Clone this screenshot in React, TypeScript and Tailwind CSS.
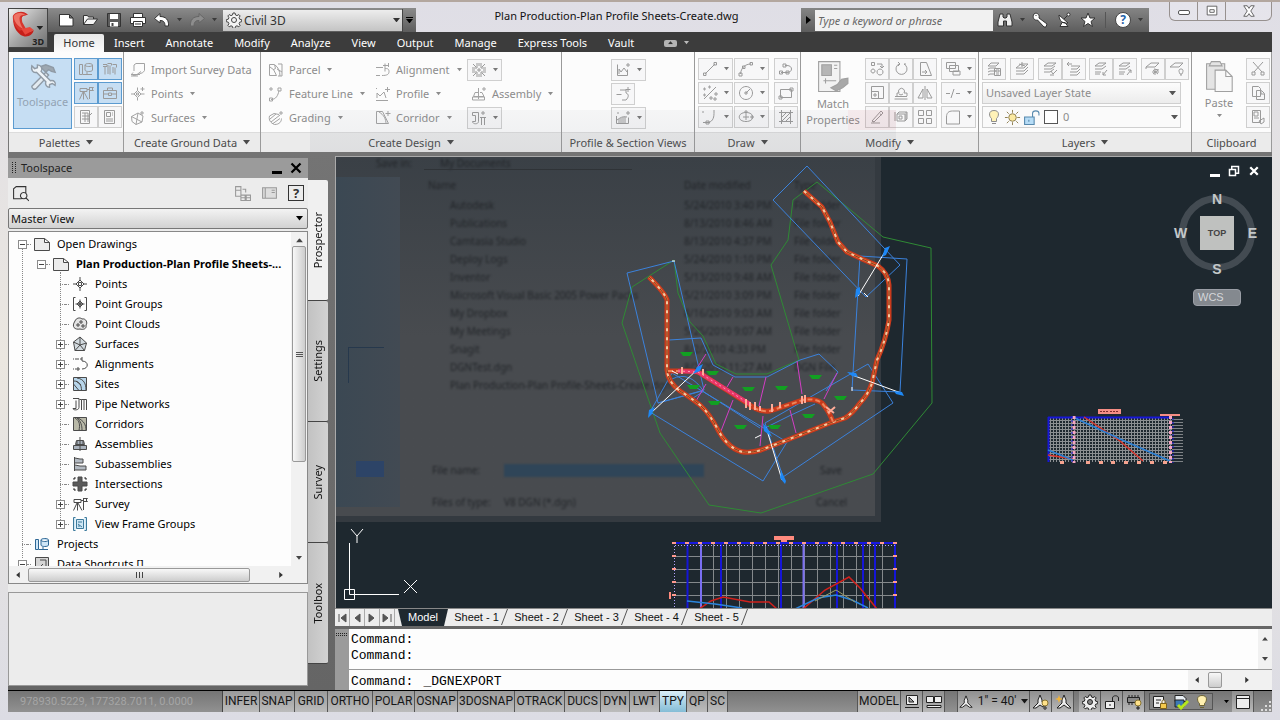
import type { ReactNode } from "react";

type IconProps = {
  d: string;
  fill?: string;
  className?: string;
  children?: ReactNode;
};

const Icon = ({ d, fill = "none", className = "size-4", children }: IconProps) => (
  <svg viewBox="0 0 16 16" className={`shrink-0 ${className}`} fill={fill} stroke="currentColor" strokeWidth="1" aria-hidden="true">
    <path d={d} />
    {children}
  </svg>
);

const Caret = ({ className = "w-[5px]" }: { className?: string }) => (
  <svg viewBox="0 0 8 5" className={`shrink-0 ${className}`} fill="currentColor" aria-hidden="true">
    <path d="M0 0h8L4 5z" />
  </svg>
);

// Line icons, all on a 16px grid
const paths = {
  prospector: "M1.5 3.5h3v10h-3zM7 4c0-2 7.500-2 7.500 0v5c0 2-7.500 2-7.500 0zM7 4c0 2 7.500 2 7.500 0M5 13.500h9M9 11v2",
  pipes: "M1 3.500h4v2h-4M3 5.500v8M5.500 2.500h4v2M8 4.500v9M6 4v9M10.500 3.500h4v3M13 6.500v7M11 6v6",
  survey: "M2 3.500h7v3h-7zM9 4.500h2M5.500 6.500v8M5 7l-3.500 7.500M6 7l4 7.500M11.500 2v12M11.500 2.500h4l-1.500 1.500 1.500 1.500h-4",
  toolbox: "M1.500 5.500h13v8h-13zM5.500 5V3h5v2M1.500 9h5M9.500 9h5M6.500 8h3v2.500h-3z",
  sheet: "M2.500 1.500h9v13h-9zM4 4h6M4 7h8M4 10h8M7 4v9M10 4v9M12 6l2-2",
  props: "M2.500 1.500h10v13h-10zM4.500 3.500h4v4h-4zM10 4h1M10 6h1M4 10h7M4 12h7",
  importData: "M4 9V3l2-1.500h8.500v7c-1 2-3 3-5 3M1 12.500h9M3 10.500c-3 3 2 4 4 2l4-3M8 14h-7",
  points: "M7.500 1.500v3M7.500 11.500v3M1 8h3.500M11 8h3.500M7.500 4.500L11 8l-3.500 3.500L4 8zM6.500 7h2v2h-2zM12.500 1v4M10.500 3h4",
  surfaces: "M1.500 6.500L8 3l5 3-1 6-6 2.500-4-3zM8 3l-2 11.500M1.500 6.500L12 12M12 1v4M10 3h4",
  parcel: "M1.500 2.500h5l1 4-2 1 3 6h-7zM7 3c3 2 5 6 5 11M10 2h4v12h-4M9 7l5 3M2 5l4 3",
  feature: "M3 1v4M1 3h4M3 13.500c5 0 7-4 8-9M1.500 12h3v3h-3zM10 2h3v3h-3z",
  grading: "M1.500 6L6 3.500l5 1M1.500 6c-1 4 1 7 5 8.500 5 0 7-3 7-6M3 12L12 5M5 13.500l7-5M2 9l6-5M13 1v4M11 3h4",
  alignment: "M1 5.500h7M10 1.500v8M7 13.500c5 0 7-1 7-4s-2-3-4-3M1 13.500h4M8 3.500h5M13.500 1v4",
  profile: "M1.500 2v1M1 14.500h12M2 12V7l3 3 4-4 2 6M12.500 1v5M10 3.500h5",
  corridor: "M1.500 1.500h6l6 12h-12zM4 2c5 3 7 7 7 12M13 1v5M10.500 3.500h5",
  intersection: "M6 1v5H1M6 15v-5H1M10 1v5h5M10 15v-5h5M8 1v3M8 6v4M8 12v3M1 8h3M6 8h4M12 8h3M2 2l3 3M14 2l-3 3M2 14l3-3M14 14l-3-3",
  assembly: "M7.500 2v11M4 6.500h3.500v4H2.500zM9 6.500h2l2 4H7.500M1.500 11h12v3h-12zM13 1v4M11 3h4",
  network: "M1.500 2.500h6v9c0 3-6 3-6 0h3v-6h-3zM10.500 7v8M13.500 7v8M9 7.500h6M12 1v4M10 3h4",
  profileView: "M2.500 2.500v11h10v-6M4 12V7l2 3 3-4 3 4M13 1v4M11 3h4",
  sample: "M5 4h6v3c3 1 3 4 0 7H7M1.500 8.500h5M13 1v5M10.500 3.500h5",
  section: "M1.500 6v7.500h12v-6M2 10c3-2 5-4 10-3M4 9v4M6 8v5M8 7v6M10 7v6M13 1v4M11 3h4M2 3h2",
  line: "M3 13L13 3M1.500 12h2.500v2.500H1.500zM12 1.500h2.500V4H12z",
  arc: "M2.500 13C3 7 7 3 13 3M1 12h3v3H1zM4.500 5h2.500v2.500H4.500zM12 1.500h2.500V4H12z",
  polyline: "M3 11.500h6c6 0 6-7 0-7H7M1.500 10h3v3h-3zM8 10h3v3H8zM5 3h3v3H5z",
  construct: "M2 14L14 2M2 3h1v2H2zM7 1h1v2H7zM2 9h1v2H2zM8 12h2v2H8zM13 8h2v2h-2zM12 13h2v2h-2z",
  circle: "M8 1.500a6.500 6.500 0 1 0 .01 0M8 8l4-4M7 7h2v2H7z",
  rect: "M2.500 4.500h11v8h-11zM1 11h3v3H1zM12 3h3v3h-3z",
  curve: "M1 13.500h4c5 0 7-4 7-9V1M8 13.500h-3M1 2v2M4 12h3v3H4z",
  ellipse: "M8 3.500c9 0 9 9 0 9s-9-9 0-9M8 5v6M5 8h6M7 2h2v2H7zM13 7h2v2h-2z",
  hatch: "M3.500 1v14M12.500 1v14M1 3.500h14M1 12.500h14M4 8l4-4M4 12l8-8M8 12l4-4",
  copy: "M2.500 1.500h3v3h-3zM4 8a2 2 0 1 0 .01 0M11 8a3 3 0 1 0 .01 0M8 3h5v3M11 5l2 2 2-2",
  rotate: "M6 3a5.500 5.500 0 1 0 5 0M5 1l2 2-2 2M11 3h2",
  stretch: "M3.500 1.500h6l5 13h-11zM5 11h5M8 9l2 2-2 2",
  scale: "M2.500 1.500h12v12h-12zM2.500 6.500h7v7M5 9h2v2H5z",
  offset: "M2 11.500h12M4 11V8h2a3 3 0 1 1 5 0h3v3M1.500 14h13M6 9l2 1 2-1",
  mirror: "M8 1v14M6 4v9H1zM10 4v9h5z",
  erase: "M2 14h9M3 12l9-10 2 2-9 9zM3 12l2 1M11 5l2 1",
  explode: "M4 5h8v7H4zM4 5l2-2h8v7l-2 2M2 3v9M6 7h3v3H6zM13 3v8",
  array: "M1.500 1.500h5v5h-5zM9.500 1.500h5v5h-5zM1.500 9.500h5v5h-5zM9.500 9.500h5v5h-5z",
  order: "M1.500 1.500h9v6h-9zM4.500 4.500h9v6h-9zM8 10h7v4H8z",
  trim: "M1 8.500h4M11 8.500h4M6 13l3-9",
  fillet: "M1.500 15V8c0-4 2-6 6-6h7v13z",
  layers: "M2 5l3-3h8l-3 3zM2 8l2-1h6M2 11l2-1h6M2 14l2-1h5M8.500 7.500h6v7h-6zM10 9h3v2h-3zM10 13h3",
  layerIso: "M2 7l5-4h7l-4 4zM2 10h8l4-4M2 13h8l4-4M8 1v5M5 3l6 2",
  layerMatch: "M2 5l4-3h8l-4 3zM2 8h7l4-3M2 11h6l4-3M9 10l2 3 4-4M8 14h4",
  layerPrev: "M5 5h9l-3 3H5M4 11h7l3-3M4 14h7l3-3M1 3h5M1 3l2-2M1 3l2 2",
  layerDown: "M2 5l4-3h7l-4 3zM2 8h7l4-3M2 11h6M2 13h5M14 9l-4 5M10 11v3h3",
  layerUp: "M2 5l4-3h7l-4 3zM2 8h7l4-3M2 11h6M2 13h5M10 14l4-5M14 12V9h-3",
  layerFreeze: "M1 6l5-4h8l-4 4zM1 6v2M9 8l5 1M10 8v6M7 11h7M8 9l5 4M13 9l-5 4",
  layerOff: "M1 6l5-4h8l-4 4zM12 8c3 0 2 3 1 5h-2c-1-2-2-5 1-5zM11 14h2",
  cut: "M3 1l9 10M13 1L4 11M2 11h3v3H2zM11 11h3v3h-3z",
  copyClip: "M2.500 1.500h6l2 2v8h-8zM6.500 5.500h5l3 3v6h-8zM11 6v3h3",
  matchClip: "M2.500 1.500h8v12h-8zM4 3h4v4H4zM9 12l5-3v4l-3 2zM4 9h5",
  drawing: "M.5 2.500h10l5 4v8H.5zM10.500 2.500v4h5",
  pointGroups: "M3.500 1.500h-2v13h2M12.500 1.500h2v13h-2M8 3.500v9M3.500 8h9M8 5l3 3-3 3-3-3zM7 7h2v2H7z",
  clouds: "M3 5c1-3 5-4 7-2 4-1 6 4 4 6 1 4-3 5-6 4-5 1-9-2-5-8zM5 8h2v2H5zM8 5h2v2H8zM10 9h2v2h-2z",
  assemblies: "M8 1v14M4.500 4.500h7l1 4h-9zM1.500 9.500h13v4h-13zM5 5v4M11 5v4",
  subassembly: "M2.500 1v14M3 2l5 1h3v4H3M3 9l5 1h6v4H3",
  shortcuts: "M1.500 1.500h13v13h-13zM4 13l5-5M6 4h6v6",
  viewFrames: "M3.500 1.500h-2v13h2M12.500 1.500h2v13h-2M4.500 3.500h7v9h-7zM6 6h4M6 8l4 3M6 10h2",
};

const BoxBtn = ({ label, d, caret = false, on = false }: { label: string; d: string; caret?: boolean; on?: boolean }) => (
  <button
    type="button"
    aria-label={label}
    className={`flex h-[22px] items-center justify-center border text-[#9a9a9a] ${
      on ? "border-[#5b9bd0] bg-[#c6def3]" : "border-[#cfcfcf] bg-gray-400/5"
    } ${caret ? "w-[35px] gap-1.5" : "w-6"}`}
  >
    <Icon d={d} />
    {caret && <Caret className="w-[5px] text-[#777]" />}
  </button>
);

const RibbonItem = ({ label, d, caret = true }: { label: string; d: string; caret?: boolean }) => (
  <button type="button" className="flex h-6 items-center gap-[5px] whitespace-nowrap text-[#8c8c8c]">
    <Icon d={d} className="size-4 text-[#a3a3a3]" />
    <span>{label}</span>
    {caret && <Caret className="ml-0.5 w-[5px]" />}
  </button>
);

const Row = ({ children }: { children: ReactNode }) => <div className="flex h-6 items-center">{children}</div>;

const Panel = ({ title, caret = true, className, children }: { title: string; caret?: boolean; className: string; children: ReactNode }) => (
  <section className={`flex flex-col border-r border-[#9a9a9a] ${className}`}>
    <div className="flex flex-1 items-start pt-[6px]">{children}</div>
    <button type="button" className="flex h-5 items-center justify-center gap-1.5 whitespace-nowrap border-t border-[#dcdcdc] bg-[#ebebeb] text-[#4a4a4a]">
      {title}
      {caret && <Caret className="w-[7px]" />}
    </button>
  </section>
);

const QatBtn = ({ label, children }: { label: string; children: ReactNode }) => (
  <button type="button" aria-label={label} className="flex h-[23px] w-6 items-center justify-center text-[#333]">
    {children}
  </button>
);

const TinyCaret = ({ label }: { label: string }) => (
  <button type="button" aria-label={label} className="flex h-[23px] w-[11px] items-center justify-center text-[#3a3a3a]">
    <Caret className="w-[5px]" />
  </button>
);

const tabs = ["Insert", "Annotate", "Modify", "Analyze", "View", "Output", "Manage", "Express Tools", "Vault"];

const TitleBar = () => (
  <div className="flex items-start">
    <div className="flex h-6 items-center bg-linear-to-b from-[#8b8b8b] to-[#5d5d5d] pl-[6px]">
      <QatBtn label="New">
        <Icon d="M1.500 2.500h10l3.500 3.500v8h-13.500zM11.500 2.500v3.500h3.500" fill="#fff" />
      </QatBtn>
      <QatBtn label="Open">
        <Icon d="M1.500 12.500V3.500h4l1 1.500h5v2M1.500 12.500l4-5.500h10l-4 5.500z" fill="#f4f4f4" />
      </QatBtn>
      <QatBtn label="Save">
        <Icon d="M1.500 1.500h13v13h-13z" fill="#5c5c5c">
          <path d="M4 2h8v5H4zM4 10h8v4.500H4z" fill="#fff" stroke="none" />
          <path d="M5.500 11h2v3h-2z" fill="#444" stroke="none" />
        </Icon>
      </QatBtn>
      <QatBtn label="Plot">
        <Icon d="M3.500 5V1.500h9V5M.5 5.500h15v6H.5z" fill="#fff">
          <path d="M3.500 9.500h9v5h-9zM5 12h6" />
        </Icon>
      </QatBtn>
      <QatBtn label="Undo">
        <Icon d="M6 1.500L.5 6.500 6 11V8.500c3 0 5 1 5 5.500h3.500C15 8 12 4.500 6 4.500z" fill="#fff" />
      </QatBtn>
      <TinyCaret label="Undo list" />
      <QatBtn label="Redo">
        <Icon d="M10 1.500l5.500 5L10 11V8.500c-3 0-5 1-5 5.500H1.500C1 8 4 4.500 10 4.500z" fill="#8d8d8d" className="size-4 text-[#666]" />
      </QatBtn>
      <TinyCaret label="Redo list" />
      <div className="ml-[3px] flex h-[21px] w-[179px] items-center bg-linear-to-b from-[#ededed] to-[#c4c4c4] pl-[3px]">
        <svg viewBox="0 0 16 16" className="size-4 shrink-0" fill="none" stroke="#444" aria-hidden="true">
          <path
            d="M7 1h2l.5 2 1.500.6 1.800-1 1.300 1.300-1 1.800.6 1.500 2 .5v2l-2 .5-.6 1.500 1 1.800-1.300 1.300-1.800-1-1.500.6-.5 2H7l-.5-2-1.500-.6-1.800 1-1.300-1.300 1-1.800-.6-1.500-2-.5v-2l2-.5.6-1.500-1-1.800 1.300-1.300 1.800 1L6.500 3z"
            fill="#f4f4f4"
          />
          <circle cx="8" cy="8" r="2.500" />
        </svg>
        <select aria-label="Workspace" className="h-full min-w-0 flex-1 appearance-none bg-transparent pl-[2px] text-[12px] text-[#333]">
          <option>Civil 3D</option>
        </select>
        <Caret className="mr-0.5 w-[7px] text-[#333]" />
      </div>
      <button type="button" aria-label="Customize toolbar" className="flex h-[23px] w-[14px] flex-col items-center justify-center gap-[1px] border-l border-[#444] text-black">
        <span className="h-[1px] w-[7px] bg-black" />
        <Caret className="w-[7px]" />
      </button>
    </div>
    <h1 className="flex-1 truncate pl-4 text-center leading-4 text-[#111]">Plan Production-Plan Profile Sheets-Create.dwg</h1>
    <div className="flex h-6 items-center bg-linear-to-b from-[#858585] to-[#5d5d5d]">
      <button type="button" aria-label="Search options" className="flex h-[23px] w-[14px] items-center justify-center">
        <svg viewBox="0 0 5 8" className="h-2" aria-hidden="true">
          <path d="M0 0v8l5-4z" />
        </svg>
      </button>
      <input
        type="text"
        aria-label="Keyword search"
        placeholder="Type a keyword or phrase"
        className="h-[21px] w-[178px] bg-[#f1f1f1] px-[3px] italic placeholder:text-[#666]"
      />
      <QatBtn label="Search">
        <Icon d="M3 2h3v3l1 1h2l1-1V2h3l2 8v4H9.500V9h-3v5H1v-4z" fill="#eee" />
      </QatBtn>
      <TinyCaret label="Search scope" />
      <QatBtn label="Subscription center">
        <Icon d="M2 2c2-2 6 0 5 4l8 6-1 3h-2L5.500 8C2 9 0 5 2 2zM4 3v1" fill="#fff" />
      </QatBtn>
      <QatBtn label="Communication center">
        <Icon d="M3 3c0 6 4 9 9 8zM8 7l4-4M4 14.500h8l-3-4H6z" fill="#fff">
          <circle cx="12.500" cy="2.500" r="1.500" />
        </Icon>
      </QatBtn>
      <QatBtn label="Favorites">
        <Icon d="M8 1l2 5h5l-4 3.500 1.500 5L8 11.500l-4.500 3 1.500-5L1 6h5z" fill="#fff" />
      </QatBtn>
      <span className="mx-[5px] h-4 w-[1px] bg-[#555]" />
      <button type="button" className="mr-1 ml-1 flex size-4 items-center justify-center rounded-full border border-[#444] bg-white text-[12px] leading-none font-bold text-[#1f62a8]">
        ?
      </button>
      <TinyCaret label="Help menu" />
      <span className="w-[3px]" />
    </div>
    <div className="-mt-[7px] ml-5 flex h-5 rounded-b-md border border-t-0 border-[#97918f] bg-white/20 text-[#555]">
      <button type="button" aria-label="Minimize" className="flex w-7 items-center justify-center border-r border-[#97918f]">
        <span className="mt-1 h-[5px] w-3 rounded-xs border border-[#555] bg-white" />
      </button>
      <button type="button" aria-label="Restore" className="flex w-7 items-center justify-center border-r border-[#97918f]">
        <Icon d="M2.500 2.500h11v10h-11zM5.500 6.500h5v3h-5z" fill="#fff" className="size-3.5" />
      </button>
      <button type="button" aria-label="Close" className="flex w-[45px] items-center justify-center">
        <Icon d="M2 2h4l2 3 2-3h4l-4 6 4 6h-4l-2-3-2 3H2l4-6z" fill="#fff" className="size-3.5" />
      </button>
    </div>
  </div>
);

const Header = () => (
  <header className="flex pt-[7px]">
    <div className="flex flex-col bg-[#3c3c3c]">
      <button type="button" className="relative h-10 w-10 border border-[#444] bg-linear-to-br from-[#f0f0f0] via-[#a8a8a8] to-[#6f6f6f]">
        <svg viewBox="0 0 40 40" className="absolute inset-0 size-full" aria-hidden="true">
          <path d="M12 27c-7-5-10-16-5-22 3-3 9-3 13 1l-5 1c-4 3-2 12 3 16 2 2 5 1 8-1-1 6-8 9-14 5z" fill="#c51f1a" />
          <path d="M4 8c1-5 10-6 15-2l-6 2 1 6 4 7-7 2C7 20 4 14 4 8z" fill="#d7372e" />
          <path d="M5 8c1-4 8-5 12-2-4 0-6 1-6 4 0 4 2 8 4 11C9 18 5 13 5 8z" fill="#ee7466" />
          <path d="M13 21l9-2 4 3-9 5z" fill="#e8473c" />
          <path d="M29 18h7l-3.500 4z" fill="#222" />
        </svg>
        <span className="absolute right-[3px] bottom-0 text-[9px] font-bold text-[#222]">3D</span>
      </button>
    </div>
    <div className="min-w-0 flex-1">
      <TitleBar />
      <nav className="flex h-5 items-stretch bg-[#3c3c3c] pt-[2px] pl-[6px] text-white">
        <button type="button" className="w-[50px] rounded-t-xs bg-linear-to-b from-[#e8e8e8] to-[#fbfbfb] text-[#333]">
          Home
        </button>
        <div className="flex gap-[21px] pl-[10px]">
          {tabs.map((tab) => (
            <button key={tab} type="button" className="whitespace-nowrap">
              {tab}
            </button>
          ))}
        </div>
        <button type="button" aria-label="Minimize ribbon" className="ml-[30px] flex items-center gap-[7px] text-[#bbb]">
          <span className="flex h-[7px] w-[13px] items-center justify-center rounded-xs bg-[#b4b4b4] text-[#333]">
            <Caret className="w-[5px] rotate-180" />
          </span>
          <Caret className="w-[5px]" />
        </button>
      </nav>
    </div>
  </header>
);

const Ribbon = () => (
  <div className="flex h-[100px] shrink-0 border-l border-[#777] bg-[#fcfcfc]">
    <Panel title="Palettes" className="w-[115px]">
      <button type="button" className="ml-1 flex h-[71px] w-[59px] flex-col items-center border border-[#5b9bd0] bg-[#c6def3] pt-1 text-[#93a3b3]">
        <svg viewBox="0 0 30 30" className="size-7" fill="none" stroke="#8f9aa5" strokeWidth="1.500" aria-hidden="true">
          <path d="M12 4l6-2 8 3 2 5-4-1-3-2-3 3-4-4z" fill="#9da7b0" />
          <path d="M18 10L6 22l-3 3c0 3 3 4 5 2L21 13z" fill="#e2eaf0" />
          <path d="M3 3l3 3 3-1V2c4 0 6 4 4 7l10 10c4-1 6 2 5 5l-3-2-3 1v3c-3 0-5-3-4-6L8 10C4 11 2 7 3 3z" fill="#eef3f7" />
        </svg>
        <span className="mt-1">Toolspace</span>
      </button>
      <div className="ml-0.5 grid grid-cols-2 gap-y-[2px]">
        <BoxBtn on label="Prospector palette" d={paths.prospector} />
        <BoxBtn on label="Settings palette" d={paths.pipes} />
        <BoxBtn on label="Survey palette" d={paths.survey} />
        <BoxBtn on label="Toolbox palette" d={paths.toolbox} />
        <BoxBtn label="Panorama" d={paths.sheet} />
        <BoxBtn label="Properties" d={paths.props} />
      </div>
    </Panel>
    <Panel title="Create Ground Data" className="w-[137px]">
      <div className="ml-[6px] flex flex-col">
        <RibbonItem label="Import Survey Data" d={paths.importData} caret={false} />
        <RibbonItem label="Points" d={paths.points} />
        <RibbonItem label="Surfaces" d={paths.surfaces} />
      </div>
    </Panel>
    <Panel title="Create Design" className="w-[301px]">
      <div className="ml-[7px] flex w-[107px] flex-col">
        <RibbonItem label="Parcel" d={paths.parcel} />
        <RibbonItem label="Feature Line" d={paths.feature} />
        <RibbonItem label="Grading" d={paths.grading} />
      </div>
      <div className="flex w-[92px] flex-col">
        <RibbonItem label="Alignment" d={paths.alignment} />
        <RibbonItem label="Profile" d={paths.profile} />
        <RibbonItem label="Corridor" d={paths.corridor} />
      </div>
      <div className="flex flex-col">
        <Row>
          <BoxBtn caret label="Intersections" d={paths.intersection} />
        </Row>
        <div className="pl-1">
          <RibbonItem label="Assembly" d={paths.assembly} />
        </div>
        <Row>
          <BoxBtn caret label="Pipe network" d={paths.network} />
        </Row>
      </div>
    </Panel>
    <Panel title="Profile & Section Views" caret={false} className="w-[133px]">
      <div className="ml-[49px] flex flex-col">
        <Row>
          <BoxBtn caret label="Profile view" d={paths.profileView} />
        </Row>
        <Row>
          <BoxBtn label="Sample lines" d={paths.sample} />
        </Row>
        <Row>
          <BoxBtn caret label="Section views" d={paths.section} />
        </Row>
      </div>
    </Panel>
    <Panel title="Draw" className="w-[106px]">
      <div className="ml-[3px] grid grid-cols-[36px_40px_24px] gap-y-[2px]">
        <BoxBtn caret label="Line" d={paths.line} />
        <BoxBtn caret label="Arc" d={paths.arc} />
        <BoxBtn label="Polyline" d={paths.polyline} />
        <BoxBtn caret label="Points by angle" d={paths.construct} />
        <BoxBtn caret label="Circle" d={paths.circle} />
        <BoxBtn label="Rectangle" d={paths.rect} />
        <BoxBtn caret label="Curve" d={paths.curve} />
        <BoxBtn caret label="Ellipse" d={paths.ellipse} />
        <BoxBtn label="Hatch" d={paths.hatch} />
      </div>
    </Panel>
    <Panel title="Modify" className="w-[178px]">
      <button type="button" className="flex w-[64px] flex-col items-center pt-0.5 leading-4 text-[#8c8c8c]">
        <svg viewBox="0 0 30 30" className="size-8" fill="#f2f2f2" stroke="#a0a0a0" aria-hidden="true">
          <path d="M1.500 1.500h20v28h-20z" />
          <path d="M4.500 4.500h9v10h-9z" fill="#b5b5b5" />
          <path d="M16 5h3M16 8h3M6 19.500h12M8 17v5" fill="none" />
          <path d="M13 26l6-3 4-5 6-1v5l-5 4-6 3z" fill="#a8a8a8" />
        </svg>
        <span className="mt-1">Match</span>
        <span>Properties</span>
      </button>
      <div className="grid grid-cols-3 gap-y-[2px]">
        <BoxBtn label="Copy" d={paths.copy} />
        <BoxBtn label="Rotate" d={paths.rotate} />
        <BoxBtn label="Stretch" d={paths.stretch} />
        <BoxBtn label="Scale" d={paths.scale} />
        <BoxBtn label="Offset" d={paths.offset} />
        <BoxBtn label="Mirror" d={paths.mirror} />
        <BoxBtn label="Erase" d={paths.erase} />
        <BoxBtn label="Explode" d={paths.explode} />
        <BoxBtn label="Array" d={paths.array} />
      </div>
      <div className="ml-1 grid gap-y-[2px]">
        <BoxBtn caret label="Draw order" d={paths.order} />
        <BoxBtn caret label="Trim" d={paths.trim} />
        <BoxBtn caret label="Fillet" d={paths.fillet} />
      </div>
    </Panel>
    <Panel title="Layers" className="w-[213px]">
      <div className="ml-[3px] flex w-[207px] flex-col gap-[2px]">
        <div className="flex justify-between">
          <BoxBtn label="Layer properties" d={paths.layers} />
          <BoxBtn label="Layer isolate" d={paths.layerIso} />
          <div className="flex">
            <BoxBtn label="Layer match" d={paths.layerMatch} />
            <BoxBtn label="Layer previous" d={paths.layerPrev} />
          </div>
          <div className="flex">
            <BoxBtn label="Make current" d={paths.layerDown} />
            <BoxBtn label="Change layer" d={paths.layerUp} />
          </div>
          <div className="flex">
            <BoxBtn label="Layer freeze" d={paths.layerFreeze} />
            <BoxBtn label="Layer off" d={paths.layerOff} />
          </div>
        </div>
        <div className="flex h-[22px] w-[199px] items-center border border-[#cfcfcf] bg-linear-to-b from-[#fcfcfc] to-[#ececec] pr-1 text-[#8c8c8c]">
          <select aria-label="Layer state" className="min-w-0 flex-1 appearance-none bg-transparent pl-[3px]">
            <option>Unsaved Layer State</option>
          </select>
          <Caret className="w-[7px] text-[#555]" />
        </div>
        <div className="flex h-[22px] w-[199px] items-center gap-0.5 border border-[#cfcfcf] bg-[#fafafa] pr-0.5 pl-[3px] text-[#8c8c8c]">
          <Icon d="M8 1.500c6 0 5 6 2.500 8v3h-5v-3C3 7.500 2 1.500 8 1.500zM6 14.500h4" fill="#fff2b8" />
          <svg viewBox="0 0 18 18" className="size-[17px]" fill="#fbe9a0" stroke="#8b7b4c" aria-hidden="true">
            <circle cx="9" cy="9" r="4" />
            <path d="M9 1v3M9 14v3M1 9h3M14 9h3M3 3l2 2M15 3l-2 2M3 15l2-2M15 15l-2-2" />
          </svg>
          <Icon d="M1.500 7.500h9v7h-9zM5.500 10v2" fill="#b6dcf6" className="size-[17px] text-[#5789ad]">
            <path d="M9 7.500V4c0-3 6-3 6 0v2" fill="none" />
          </Icon>
          <span className="ml-[2px] size-[14px] border border-[#555] bg-white" />
          <select aria-label="Layer" className="min-w-0 flex-1 appearance-none bg-transparent pl-[3px]">
            <option>0</option>
          </select>
          <Caret className="w-[7px] text-[#555]" />
        </div>
      </div>
    </Panel>
    <Panel title="Clipboard" caret={false} className="min-w-20 flex-1">
      <button type="button" className="flex w-[54px] flex-col items-center pt-0.5 text-[#8c8c8c]">
        <svg viewBox="0 0 26 30" className="h-8" fill="#e4e4e4" stroke="#a0a0a0" aria-hidden="true">
          <path d="M1.500 3.500h17v24h-17z" />
          <path d="M6 1.500h8l2 4H4z" />
          <path d="M9.500 9.500h10l6 6v14h-16zM19.500 9.500v6h6" fill="#f8f8f8" />
        </svg>
        <span className="mt-1">Paste</span>
        <Caret className="mt-1 w-[5px]" />
      </button>
      <div className="grid gap-y-[2px]">
        <BoxBtn label="Cut" d={paths.cut} />
        <BoxBtn label="Copy clip" d={paths.copyClip} />
        <BoxBtn label="Match clip" d={paths.matchClip} />
      </div>
    </Panel>
  </div>
);

type TreeNode = { label: string; level: 0 | 1 | 2; box: "+" | "-" | ""; d: string; fill?: string; tone?: string };

const tree: TreeNode[] = [
  { label: "Open Drawings", level: 0, box: "-", d: paths.drawing, fill: "#ececec" },
  { label: "Plan Production-Plan Profile Sheets-...", level: 1, box: "-", d: paths.drawing, fill: "#ececec" },
  { label: "Points", level: 2, box: "", d: "M8 1v3M8 12v3M1 8h3M12 8h3M8 4l4 4-4 4-4-4zM6.500 6.500h3v3h-3z" },
  { label: "Point Groups", level: 2, box: "", d: paths.pointGroups },
  { label: "Point Clouds", level: 2, box: "", d: paths.clouds, fill: "#e4e4e4" },
  { label: "Surfaces", level: 2, box: "+", d: "M1.500 6l6.500-5 6.500 6-2 7.500h-9.500zM8 1v8M8 9l6.500-2M8 9l-5 5.500M8 9l4.500 5.500M1.500 6L8 9", fill: "#d3dbe0" },
  { label: "Alignments", level: 2, box: "+", d: "M1 3h1M3 3h4M8 3h2M10 1v4M3 13h5M1 13h1M10 13c7 0 7-8 0-8M6 11v4" },
  { label: "Sites", level: 2, box: "+", d: "M1.500 1.500h13v13h-13zM1.500 5c6 0 8 4 8 9.500M5 2c7 1 9 6 9 12M1.500 8l5 6M4 5l5 4", fill: "#b7d5ea" },
  { label: "Pipe Networks", level: 2, box: "+", d: "M1 2.500h6v9c0 3-6 3-6 1h3v-8M9.500 14V3.500h5V14M9.500 3.500h-2M12 4v10" },
  { label: "Corridors", level: 2, box: "", d: "M1.500 1.500h13v13h-13zM3 2c5 3 5 7 4 12.500M6 2c6 3 8 7 8 12M5 2c4 3 5 8 5 12", fill: "#b9b9a8" },
  { label: "Assemblies", level: 2, box: "", d: paths.assemblies, fill: "#a9b2bd" },
  { label: "Subassemblies", level: 2, box: "", d: paths.subassembly, fill: "#b3bac2" },
  { label: "Intersections", level: 2, box: "", d: "M6 1h4v5h5v4h-5v5H6v-5H1V6h5zM3 1v2H1M13 1v2h2M3 15v-2H1M13 15v-2h2", fill: "#5b5b5b" },
  { label: "Survey", level: 2, box: "+", d: paths.survey },
  { label: "View Frame Groups", level: 2, box: "+", d: paths.viewFrames, fill: "#cfe7f5", tone: "text-[#3d7a9c]" },
  { label: "Projects", level: 0, box: "", d: paths.prospector, fill: "#cfe6f7", tone: "text-[#2e6795]" },
  { label: "Data Shortcuts []", level: 0, box: "-", d: paths.shortcuts, fill: "#d5d5d5" },
];

const indents = ["pl-[9px]", "pl-[28px]", "pl-[47px]"];

const TreeRow = ({ node }: { node: TreeNode }) => (
  <li className={`relative flex h-5 items-center whitespace-nowrap ${indents[node.level]}`}>
    {node.box ? (
      <button
        type="button"
        aria-label={`Toggle ${node.label}`}
        className="flex size-[9px] shrink-0 items-center justify-center border border-[#8c8c8c] bg-white text-[#444]"
      >
        <svg viewBox="0 0 5 5" className="size-[5px]" stroke="currentColor" aria-hidden="true">
          <path d={node.box === "+" ? "M0 2.500h5M2.500 0v5" : "M0 2.500h5"} />
        </svg>
      </button>
    ) : (
      <span className="ml-1 w-[5px] shrink-0 border-t border-dotted border-[#888]" />
    )}
    <span className="mr-[3px] w-1 shrink-0 border-t border-dotted border-[#888]" />
    <Icon d={node.d} fill={node.fill} className={`size-4 ${node.tone ?? "text-[#4a4a4a]"}`} />
    <span className={`ml-[7px] text-black ${node.level === 1 ? "font-bold" : ""}`}>{node.label}</span>
  </li>
);

const Toolspace = () => (
  <aside className="mt-[2px] mb-1 flex w-[300px] shrink-0 flex-col bg-[#ececec]">
    <div className="flex h-5 items-center bg-[#9b9b9b] px-1 text-[#222]">
      <svg viewBox="0 0 5 12" className="h-3" stroke="#222" strokeDasharray="1 1" aria-hidden="true">
        <path d="M.5 0v12M3.500 0v12" />
      </svg>
      <h2 className="flex-1 pl-[4px]">Toolspace</h2>
      <button type="button" aria-label="Minimize palette" className="mt-2 mr-2 h-[3px] w-[10px] bg-black" />
      <button type="button" aria-label="Close palette" className="mr-[2px]">
        <Icon d="M2 2l12 12M14 2L2 14" className="size-3 stroke-[3px] text-black" />
      </button>
    </div>
    <div className="flex h-[30px] items-center gap-[10px] px-1">
      <button type="button" aria-label="Find item" className="mr-auto">
        <Icon d="M9 13H1.500V3.500L4 1.500h9v6M11 7a3 3 0 1 0 .01 0M13 12l3 3" className="size-[17px] text-[#333]" />
      </button>
      <button type="button" aria-label="Item view">
        <Icon d="M1.500 1.500h5v9h-5zM1.500 5h5M8 4h3v3M6.500 9.500h4v5h-4zM11.500 9.500h4v5h-4zM7 12h8" className="size-[17px] text-[#999]" />
      </button>
      <button type="button" aria-label="Panorama display">
        <Icon d="M1.500 2.500h13v10h-13zM4 3v9M10 5h3M10 7h3" fill="#ddd" className="size-[17px] text-[#999]" />
      </button>
      <button type="button" className="flex size-4 items-center justify-center border border-[#333] text-[13px] leading-none font-bold text-[#333]">?</button>
    </div>
    <div className="flex h-[21px] shrink-0 items-center rounded-xs border border-[#777] bg-linear-to-b from-[#f3f3f3] to-[#d2d2d2] pr-1">
      <select aria-label="View" className="min-w-0 flex-1 appearance-none bg-transparent pl-[2px] text-[#111]">
        <option>Master View</option>
      </select>
      <Caret className="w-[7px] text-black" />
    </div>
    <div className="mt-[2px] flex min-h-0 flex-1 flex-col border border-[#888] bg-[#fdfdfd]">
      <div className="flex min-h-0 flex-1">
        <ul className="relative min-w-0 flex-1 overflow-hidden pt-[2px]">
          <li aria-hidden="true" className="absolute top-4 left-[13px] h-[310px] border-l border-dotted border-[#888]" />
          <li aria-hidden="true" className="absolute top-10 left-[51px] h-[252px] border-l border-dotted border-[#888]" />
          {tree.map((node) => (
            <TreeRow key={node.label} node={node} />
          ))}
        </ul>
        <div className="flex w-4 flex-col items-center bg-[#f1f1f1] py-1.5 text-[#444]">
          <Caret className="w-[7px] rotate-180" />
          <div className="mt-1 flex h-[216px] w-[14px] flex-col items-center justify-center gap-[1px] rounded-xs border border-[#999] bg-linear-to-r from-[#f8f8f8] to-[#cdcdcd]">
            <span className="h-[1px] w-[7px] bg-[#555]" />
            <span className="h-[1px] w-[7px] bg-[#555]" />
            <span className="h-[1px] w-[7px] bg-[#555]" />
          </div>
          <Caret className="mt-auto w-[6px]" />
        </div>
      </div>
      <div className="flex h-[17px] items-center bg-[#f1f1f1] pl-1.5 text-[#333]">
        <Caret className="w-[6px] rotate-90" />
        <div className="ml-[7px] flex h-[14px] w-[222px] items-center justify-center gap-[2px] rounded-xs border border-[#999] bg-linear-to-b from-[#f8f8f8] to-[#cdcdcd]">
          <span className="h-[6px] w-[1px] bg-[#444]" />
          <span className="h-[6px] w-[1px] bg-[#444]" />
          <span className="h-[6px] w-[1px] bg-[#444]" />
        </div>
        <Caret className="ml-7 w-[6px] -rotate-90" />
      </div>
    </div>
    <div className="mt-2 h-[94px] shrink-0 border border-[#999]" />
  </aside>
);

const sideTabs = ["Prospector", "Settings", "Survey", "Toolbox"];

const SideTabs = () => (
  <div className="mt-6 flex w-5 shrink-0 flex-col">
    {sideTabs.map((tab, index) => (
      <button
        key={tab}
        type="button"
        className={`flex h-[121px] items-center justify-center rounded-r-xs border-b border-[#444] text-[#111] ${
          index === 0 ? "bg-[#f0f0f0]" : "bg-linear-to-r from-[#c2c2c2] to-[#d2d2d2]"
        }`}
      >
        <span className="rotate-180 [writing-mode:vertical-rl]">{tab}</span>
      </button>
    ))}
  </div>
);

const files = [
  ["Autodesk", "5/24/2010 3:40 PM", "File folder"],
  ["Publications", "8/13/2010 8:46 AM", "File folder"],
  ["Camtasia Studio", "8/13/2010 4:37 PM", "File folder"],
  ["Deploy Logs", "5/24/2010 1:10 PM", "File folder"],
  ["Inventor", "5/13/2010 9:48 AM", "File folder"],
  ["Microsoft Visual Basic 2005 Power Packs", "5/21/2010 3:09 PM", "File folder"],
  ["My Dropbox", "8/16/2010 9:03 AM", "File folder"],
  ["My Meetings", "5/25/2010 9:07 AM", "File folder"],
  ["Snagit", "8/2/2010 4:33 PM", "File folder"],
  ["DGNTest.dgn", "8/2/2010 11:27 AM", "DGN File"],
  ["Plan Production-Plan Profile-Sheets-Create.dgn", "", ""],
];

// Export dialog fading out behind the drawing
const FadingDialog = () => (
  <div className="absolute top-0 left-0 h-[365px] w-[545px] overflow-hidden border-r-[6px] border-b-[6px] border-[#343a40] bg-linear-to-b from-[#3a4046] via-[#484b4f] to-[#484b4f] text-[10px] text-[#23262a]">
    <div className="absolute top-5 left-0 h-[330px] w-16 bg-linear-to-r from-[#3b4853] to-[#424a53]" />
    <div className="absolute top-[304px] left-5 h-4 w-7 bg-[#2d4467]" />
    <div className="absolute top-[190px] left-3 h-9 w-9 border-t border-l border-[#26384c]" />
    <div className="absolute top-0 left-10 flex gap-7 leading-3 blur-[1px]">
      <span>Save in:</span>
      <span>My Documents</span>
    </div>
    <div className="absolute top-3 left-[88px] w-[208px] border-t border-[#2f3337]" />
    <table className="absolute top-[18px] left-[92px] w-[450px] table-fixed text-left blur-[1px]">
      <thead>
        <tr className="h-[21px]">
          <th className="w-[256px] font-normal">Name</th>
          <th className="w-[110px] font-normal">Date modified</th>
          <th className="font-normal">Type</th>
        </tr>
      </thead>
      <tbody>
        {files.map(([name, date, type]) => (
          <tr key={name} className="h-[18px]">
            <td className="pl-[22px] whitespace-nowrap">{name}</td>
            <td className="whitespace-nowrap">{date}</td>
            <td className="whitespace-nowrap">{type}</td>
          </tr>
        ))}
      </tbody>
    </table>
    <div className="absolute top-[305px] left-[96px] flex h-4 items-center blur-[1px]">
      <span className="w-[72px]">File name:</span>
      <span className="h-[13px] w-[200px] bg-[#2f4558]" />
      <span className="pl-[116px]">Save</span>
    </div>
    <div className="absolute top-[337px] left-[96px] flex items-center leading-4 blur-[1px]">
      <span className="w-[72px]">Files of type:</span>
      <span className="w-[312px]">V8 DGN (*.dgn)</span>
      <span>Cancel</span>
    </div>
  </div>
);

const roadMain =
  "M804 191L822 207L830 222L838 242L847 252L862 259L878 266Q888 273 889 285V320Q886 340 877 360L872 383Q868 395 860 403Q852 414 845 418L830 423L787 440L761 450Q745 455 735 449Q725 443 718 430Q710 414 700 405Q688 396 680 391Q668 382 667 370V300Q665 293 649 277";
const roadInner = "M668 371L690 371Q698 371 703 375L753 407Q760 412 770 411L803 400Q815 398 822 403Q829 411 833 422";

const lotMarks = [
  [687, 354], [713, 373], [694, 387], [715, 403], [749, 389], [782, 388], [816, 377], [841, 398], [809, 416], [741, 427], [775, 427],
];

const gridX = Array.from({ length: 16 }, (_, i) => 687 + i * 13);
const gridY = [556, 569, 582, 595];
const tickX = Array.from({ length: 18 }, (_, i) => 674 + i * 13);

const PlanDrawing = () => (
  <svg className="absolute inset-0 size-full" aria-hidden="true" fill="none">
    <defs>
      <pattern id="mesh" width="3" height="3" patternUnits="userSpaceOnUse">
        <path d="M0 .5h3M.5 0v3" stroke="#8b8f92" strokeWidth="1" />
      </pattern>
    </defs>
    <g transform="translate(-336 -157)">
      <path
        d="M674 260L632 287L622 323L660 433L709 505L761 513L873 474L932 403L931 248L883 237L817 182L793 200L788 240L771 265L799 360L767 374H736L716 364L703 336L690 322L678 293z"
        stroke="#2f8a35"
      />
      <g stroke="#3b82dc">
        <path d="M807 166L773 200L866 297L900 265z" />
        <path d="M860 256L907 259L900 392L852 390z" />
        <path d="M627 273L674 261L704 390L658 403z" />
        <path d="M650 412L763 481L787 442L672 373z" />
        <path d="M783 477L893 403L868 364L765 423z" />
        <path d="M669 340L701 338L713 365L735 377H767L800 360L819 354L838 372L826 391" />
        <path d="M672 379Q690 370 704 392L760 428M704 391L690 400M658 403L702 391M765 428Q790 415 815 404M766 450L787 442" />
      </g>
      <g stroke="#d33ec6">
        <path d="M706 354L697 368M706 384L696 401M733 377L727 387M733 400L721 431M766 377L759 406M763 416L760 446M797 361L802 394M790 410L796 433M837 373L824 399" />
      </g>
      <path d={roadMain} stroke="#c93a1c" strokeWidth="5" />
      <path d={roadMain} stroke="#e8703a" strokeWidth="2" />
      <path d={roadMain} stroke="#7d4524" strokeWidth="1" />
      <path d={roadMain} stroke="#f3c9a2" strokeWidth="2" strokeDasharray="3 6" />
      <path d={roadInner} stroke="#c93a1c" strokeWidth="5" />
      <path d={roadInner} stroke="#ee8558" strokeWidth="2" strokeDasharray="5 3" />
      <path d="M678 371L698 372L750 404" stroke="#e8366a" strokeWidth="4" />
      <path d="M678 371L698 372L750 404" stroke="#ff9fb3" strokeWidth="1" strokeDasharray="2 3" />
      <path d="M746 399v9M750 402v8M755 402v8M760 406v5M772 404v8M780 402v6M802 396v8M805 395v8M826 407l8 6M828 413l7-6M682 367v7M703 369v6" stroke="#ffab98" strokeWidth="2" />
      {lotMarks.map(([x, y]) => (
        <path key={`${x}-${y}`} d={`M${x - 7} ${y - 2}h13l-3 4h-7z`} fill="#12a022" />
      ))}
      <g stroke="#fff" strokeWidth="1">
        <path d="M886 250L858 296M699 368L652 412M766 427L782 480M852 375L901 393M672 371l6 3M755 438l6-3M852 387v4M864 293l4 4M672 261h3" />
      </g>
      <g fill="#1e88f5">
        <path d="M890 246l-5 2-3 9 4-2zM855 298l1-9 4-2v7zM703 364l-6 3-4 7 7-3zM648 418l1-8 6-3-3 7zM763 423l1 8 8 6-4-8zM780 478l1-8 5 11-1 3zM847 372l9 1 2 4-6-1zM904 396l-2-4-8-1 2 3z" />
      </g>

      {/* sheet profile, lower */}
      <path d={gridX.map((x) => `M${x + 0.5} 544V609`).join("") + gridY.map((y) => `M674 ${y + 0.5}H896`).join("")} stroke="#84898c" />
      <path d="M687.500 543V609M721 543V609M781 543V609M837 543V609M863 543V609M875 543V609M895 543V609" stroke="#1515d8" strokeWidth="2" />
      <path d="M701 543V609M803.500 543V609" stroke="#7a6ff2" strokeWidth="2" />
      <path d="M674 543H896" stroke="#1818e0" strokeWidth="2" />
      <path d="M674.500 543V609M675 545.500H896" stroke="#b6a5ff" strokeDasharray="1 2" />
      <path d={tickX.map((x) => `M${x - 2} 543h4`).join("") + [556, 569, 582, 595].map((y) => `M672 ${y}h4M893 ${y}h4`).join("")} stroke="#ff9a8f" strokeWidth="2" />
      <path d="M774 536h20v4h-7v2h-6v-2h-7zM669 592h2v7h-2z" fill="#ff8a7d" />
      <path d="M699 609L711 601L723 597L750 602H769L777 609M803 609L825 590L849 577L860 588L877 609" stroke="#d0201c" strokeWidth="1.500" />
      <path d="M687 601L715 604L742 608M795 609L818 598L836 595L852 600L868 608" stroke="#2b86dd" strokeWidth="1.500" />
      <path d="M815 601L836 590L855 602" stroke="#9a9a68" />

      {/* sheet profile, right */}
      <rect x="1048" y="417" width="124" height="45" fill="url(#mesh)" />
      <path d="M1172 419.500h11M1172 422.500h11M1172 425.500h11M1172 428.500h11M1172 431.500h11M1172 434.500h11M1172 437.500h11M1172 440.500h11M1172 443.500h11M1172 446.500h11M1172 449.500h11M1172 452.500h11M1172 455.500h11M1172 458.500h11M1172 461.500h11" stroke="#7f8386" />
      <path d="M1048 417.500H1172M1048.500 417V462" stroke="#1616d8" strokeWidth="2" />
      <path d="M1048 455L1073 459M1084 417L1120 441L1143 461" stroke="#d9332b" strokeWidth="1.500" />
      <path d="M1048 450L1073 460M1075 418L1120 439L1170 461" stroke="#2a7fd4" strokeWidth="1.500" />
      <path d="M1074 416V463M1170.500 416V463" stroke="#f5a6c3" strokeWidth="3" strokeDasharray="3 2" />
      <path d="M1072 416V463M1173 418V463" stroke="#1616d8" strokeDasharray="2 2" />
      <path d="M1060 462.500h4M1086 462.500h4M1099 462.500h4M1111 462.500h4M1124 462.500h4M1137 462.500h4M1150 462.500h4M1163 462.500h4" stroke="#f5a38f" strokeWidth="3" />
      <path d="M1098 409h23v5h-23zM1160 414h20v2h-20z" fill="#f58d84" />
      <path d="M1100 411.500h8M1110 411.500h9" stroke="#7d2d2d" strokeDasharray="2 1" />
    </g>
  </svg>
);

const Canvas = () => (
  <div className="relative min-h-0 flex-1 overflow-hidden border-t border-l border-[#aaa] bg-[#1e282f]">
    <FadingDialog />
    <PlanDrawing />
    <svg viewBox="0 0 80 80" className="absolute bottom-0 left-2 size-20" stroke="#fff" fill="none" aria-hidden="true">
      <path d="M5.500 15V66.500H55M.5 61.500h10v10h-10zM60 52l13 13M73 52L60 65M7 1l6 7 6-7M13 8v7" />
    </svg>
    <div className="absolute top-2 right-3 flex items-center gap-2 text-white">
      <button type="button" aria-label="Minimize drawing" className="mt-2 h-[3px] w-[10px] bg-white" />
      <button type="button" aria-label="Restore drawing">
        <Icon d="M2 6h8v8H2zM5 5V2h9v9h-3" className="size-3 stroke-2" />
      </button>
      <button type="button" aria-label="Close drawing">
        <Icon d="M3 3l10 10M13 3L3 13" className="size-3 stroke-[3px]" />
      </button>
    </div>
    <div className="absolute top-[33px] right-3 size-[86px] font-['Liberation_Sans',sans-serif] text-[14px] leading-none font-bold text-[#c4c8ca]">
      <div className="absolute inset-[5px] rounded-full border-[7px] border-[#434b52]" />
      <span className="absolute top-[2px] left-1/2 -translate-x-1/2">N</span>
      <span className="absolute bottom-0 left-1/2 -translate-x-1/2">S</span>
      <span className="absolute top-1/2 left-0 -translate-y-1/2">W</span>
      <span className="absolute top-1/2 right-[3px] -translate-y-1/2">E</span>
      <button type="button" className="absolute inset-[26px] bg-[#bfc1bf] text-[9px] text-[#444]">
        TOP
      </button>
    </div>
    <button type="button" className="absolute top-[132px] right-[31px] h-[17px] w-12 rounded-sm border border-[#9a9ea6] bg-[#84898f] pl-1 text-left font-['Liberation_Sans',sans-serif] text-[11px] leading-none text-[#d4d7da]">
      WCS
    </button>
  </div>
);

const sheets = ["Sheet - 1", "Sheet - 2", "Sheet - 3", "Sheet - 4", "Sheet - 5"];
const navPaths = ["M2 1v8M9 1v8L4 5z", "M8 1v8L3 5z", "M2 1v8l5-4z", "M1 1v8l5-4zM9 1v8"];
const navLabels = ["First sheet", "Previous sheet", "Next sheet", "Last sheet"];

const SheetTabs = () => (
  <div className="flex h-[18px] shrink-0 items-stretch border-t border-[#888] bg-[#ededed] font-['Liberation_Sans',sans-serif] text-[11px] text-[#111]">
    {navPaths.map((d, i) => (
      <button key={d} type="button" aria-label={navLabels[i]} className="flex w-[15px] items-center justify-center border-r border-[#aaa]">
        <svg viewBox="0 0 10 10" className="size-2.5" fill="#555" stroke="#555" aria-hidden="true">
          <path d={d} />
        </svg>
      </button>
    ))}
    <button type="button" className="ml-[3px] w-[50px] bg-[#1e282f] text-white [clip-path:polygon(0_0,100%_0,92%_100%,8%_100%)]">
      Model
    </button>
    {sheets.map((sheet) => (
      <button key={sheet} type="button" className="flex w-[60px] items-center whitespace-nowrap">
        <span className="flex-1 pl-1 text-center">{sheet}</span>
        <svg viewBox="0 0 7 17" className="h-[17px] w-[7px] shrink-0" stroke="#555" aria-hidden="true">
          <path d="M6.500 0L.5 16" />
        </svg>
      </button>
    ))}
  </div>
);

const CommandLine = () => (
  <div className="mt-[3px] flex h-[61px] shrink-0 bg-[#fdfdfd] font-['Liberation_Mono',monospace] text-[13px] text-black">
    <div className="flex w-[14px] justify-center bg-[#9b9b9b] pt-1">
      <svg viewBox="0 0 12 4" className="h-1" stroke="#222" strokeDasharray="1 1" aria-hidden="true">
        <path d="M0 .5h12M0 2.500h12" />
      </svg>
    </div>
    <div className="flex min-w-0 flex-1 flex-col">
      <div className="flex h-[43px] border-b border-[#999]">
        <div className="flex-1 pt-[3px] pl-[2px] leading-4">
          <p>Command:</p>
          <p>Command:</p>
        </div>
        <div className="flex w-[14px] flex-col items-center justify-between bg-[#f1f1f1] py-2 text-[#444]">
          <Caret className="w-[6px] rotate-180" />
          <Caret className="w-[6px]" />
        </div>
      </div>
      <div className="flex flex-1 items-stretch">
        <label className="flex min-w-0 flex-1 items-center pt-1 pl-[2px]">
          Command:
          <input type="text" defaultValue="_DGNEXPORT" className="ml-2.5 min-w-0 flex-1 bg-transparent" />
        </label>
        <div className="flex h-full w-[84px] items-center bg-[#f1f1f1] pl-1.5 text-[#333]">
          <Caret className="w-[6px] rotate-90" />
          <span className="ml-2 h-4 w-[14px] rounded-xs border border-[#999] bg-linear-to-b from-[#f8f8f8] to-[#cdcdcd]" />
          <Caret className="ml-[22px] w-[6px] -rotate-90" />
        </div>
      </div>
    </div>
  </div>
);

const modes = [
  { label: "INFER", width: "w-[37px]" },
  { label: "SNAP", width: "w-[35px]" },
  { label: "GRID", width: "w-[33px]" },
  { label: "ORTHO", width: "w-[45px]" },
  { label: "POLAR", width: "w-[42px]" },
  { label: "OSNAP", width: "w-[43px]" },
  { label: "3DOSNAP", width: "w-[57px]" },
  { label: "OTRACK", width: "w-[50px]" },
  { label: "DUCS", width: "w-[36px]" },
  { label: "DYN", width: "w-[29px]" },
  { label: "LWT", width: "w-[30px]" },
  { label: "TPY", width: "w-[27px]" },
  { label: "QP", width: "w-[21px]" },
  { label: "SC", width: "w-[20px]" },
];

const StatusBtn = ({ label, children }: { label: string; children: ReactNode }) => (
  <button type="button" aria-label={label} className="flex w-[22px] items-center justify-center border-r border-[#555] bg-linear-to-b from-[#8f8f8f] to-[#b9b9b9] text-[#222]">
    {children}
  </button>
);

const StatusBar = () => (
  <footer className="flex h-[22px] shrink-0 items-stretch border-t border-black bg-linear-to-b from-[#757575] to-[#919191] font-[Roboto,sans-serif] text-[12px] text-[#161616]">
    <div className="flex w-[215px] items-center border-r border-[#444] pl-3 text-[11px] text-[#a5a5a5]">978930.5229, 177328.7011, 0.0000</div>
    {modes.map(({ label, width }) => (
      <button
        key={label}
        type="button"
        className={`${width} shrink-0 border-r border-[#555] whitespace-nowrap ${
          label === "TPY" ? "bg-linear-to-b from-[#d9eef7] to-[#84bdd6]" : "bg-linear-to-b from-[#9a9a9a] to-[#bcbcbc]"
        }`}
      >
        {label}
      </button>
    ))}
    <div className="ml-auto flex items-stretch">
      <button type="button" className="w-[44px] border-r border-l border-[#555] bg-linear-to-b from-[#9a9a9a] to-[#bcbcbc]">
        MODEL
      </button>
      <StatusBtn label="Quick view layouts">
        <Icon d="M2.500 1.500h11v9h-11zM1 13.500h14M5 3v5h5z" fill="#eee" />
      </StatusBtn>
      <StatusBtn label="Quick view drawings">
        <Icon d="M.5 2.500h7v6h-7zM8.500 2.500h7v6h-7zM1 11.500h14v2H1z" fill="#eee" />
      </StatusBtn>
      <button type="button" className="ml-3 flex w-[73px] items-center justify-center gap-[5px] border-r border-l border-[#555] bg-linear-to-b from-[#8f8f8f] to-[#b9b9b9] whitespace-nowrap">
        <Icon d="M8 1L6 6v3l-5 5h3l4-3 4 3h3l-5-5V6z" fill="#eee" className="size-3.5" />
        1" = 40'
        <Caret className="w-[7px]" />
      </button>
      <StatusBtn label="Annotation visibility">
        <Icon d="M7 1L5 6v3l-5 5h3l4-3 3 2 1-3-2-2V6z" fill="#eee">
          <circle cx="12" cy="9" r="3" fill="#ffe28a" stroke="#8a7530" />
          <path d="M11 13h2v2h-2z" />
        </Icon>
      </StatusBtn>
      <StatusBtn label="Auto scale">
        <Icon d="M9 1L7 6v3l-5 5h3l4-3 4 3h3l-5-5V6z" fill="#eee">
          <path d="M4 1l1 3 3 1-3 1-1 3-1-3-3-1 3-1z" fill="#f2b53a" stroke="none" />
        </Icon>
      </StatusBtn>
      <span className="w-[5px]" />
      <StatusBtn label="Workspace switching">
        <svg viewBox="0 0 16 16" className="size-4" fill="none" stroke="#222" aria-hidden="true">
          <path
            d="M7 1h2l.5 2 1.500.6 1.800-1 1.300 1.300-1 1.800.6 1.500 2 .5v2l-2 .5-.6 1.500 1 1.800-1.300 1.300-1.800-1-1.500.6-.5 2H7l-.5-2-1.500-.6-1.800 1-1.300-1.300 1-1.800-.6-1.500-2-.5v-2l2-.5.6-1.500-1-1.800 1.300-1.300 1.800 1L6.500 3z"
            fill="#eee"
          />
          <circle cx="8" cy="8" r="2.500" fill="#888" />
        </svg>
      </StatusBtn>
      <StatusBtn label="Lock toolbars">
        <Icon d="M1.500 7.500h9v7h-9zM6 10v2" fill="#eee">
          <path d="M8.500 7.500V4c0-3 6-3 6 0v3" fill="none" />
        </Icon>
      </StatusBtn>
      <StatusBtn label="Performance">
        <Icon d="M1.500 3.500h12v5h-12zM3 3V1M6 3V1M9 3V1M12 3V1M3 9v2M6 9v2" fill="#888">
          <circle cx="12" cy="9" r="3" fill="#ffe28a" stroke="#8a7530" />
          <path d="M11 13h2v2h-2z" />
        </Icon>
      </StatusBtn>
      <div className="mx-1 my-0.5 flex w-16 items-center justify-around border border-[#555] bg-[#858585] text-[#222]">
        <Icon d="M1.500 2.500h10v11h-10zM4 6h5M4 9h3" fill="#eee">
          <path d="M8.500 9.500h6v5h-6z" fill="#f5ca4c" stroke="#80621a" />
          <path d="M10 9V7.500c0-2 3-2 3 0V9" stroke="#80621a" />
        </Icon>
        <Icon d="M2 1.500h8l3 3v3H2z" fill="#e8eef3">
          <path d="M2 6h9v7H2z" fill="#3d79b5" />
          <path d="M5 11l3 3 7-7" stroke="#b5e61d" strokeWidth="3" fill="none" />
        </Icon>
        <Icon d="M8 1.500c6 0 5 6 2.500 8v2h-5v-2C3 7.500 2 1.500 8 1.500zM6 13.500h4" fill="#fff0b0" className="size-4 text-[#6d6436]" />
      </div>
      <button type="button" aria-label="Status bar menu" className="ml-[3px] flex w-3 items-center justify-center text-black">
        <Caret className="w-[5px]" />
      </button>
      <StatusBtn label="Clean screen">
        <Icon d="M1.500 1.500h13v13h-13zM1.500 4.500h13" fill="#eee" />
      </StatusBtn>
      <svg viewBox="0 0 12 12" className="mt-auto ml-1.5 size-3" fill="#ddd" aria-hidden="true">
        <path d="M9 1h2v2H9zM9 5h2v2H9zM5 5h2v2H5zM9 9h2v2H9zM5 9h2v2H5zM1 9h2v2H1z" />
      </svg>
    </div>
  </footer>
);

export default function App() {
  return (
    <div className="relative flex h-screen flex-col overflow-hidden border-t-2 border-[#b3a79f] bg-linear-to-b from-[#dfdee6] via-[#ebe7e0] to-[#dcdce4] px-2 pb-2 font-['Noto_Sans',sans-serif] text-[11px] leading-tight">
      <div className="-mt-[1px] flex min-h-0 flex-1 flex-col">
        <Header />
        <Ribbon />
        <main className="flex min-h-0 flex-1 bg-linear-to-b from-[#747474] to-[#656565] pt-1">
          <Toolspace />
          <SideTabs />
          <div className="ml-[7px] flex min-w-0 flex-1 flex-col">
            <Canvas />
            <SheetTabs />
            <CommandLine />
          </div>
        </main>
        <StatusBar />
      </div>
      <div className="pointer-events-none absolute top-[108px] left-[310px] h-[42px] w-[586px] bg-linear-to-b from-gray-500/5 to-gray-500/10">
        <div className="ml-auto h-5 w-12 bg-red-500/5" />
      </div>
    </div>
  );
}
